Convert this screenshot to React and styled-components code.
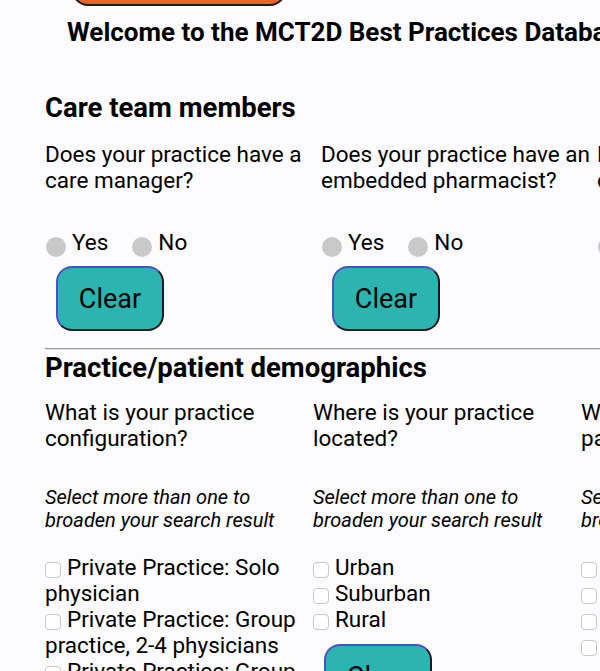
import React from "react";
import styled, { createGlobalStyle } from "styled-components";

const GlobalStyle = createGlobalStyle`
  html, body {
    margin: 0;
    padding: 0;
    overflow-x: hidden;
    background: #fcfbfd;
  }
  body {
    font-family: Roboto, "Liberation Sans", sans-serif;
    color: #000;
  }
`;

const Page = styled.div`
  width: 900px;
  padding-bottom: 40px;
`;

const TopButton = styled.button`
  display: block;
  margin: -52px 0 0 72px;
  width: 214px;
  height: 58px;
  background: #e8642f;
  border: 2px solid #1c1c1c;
  border-radius: 16px;
`;

const Title = styled.h2`
  margin: 12px 0 0 67px;
  font-size: 26px;
  line-height: 28px;
  font-weight: 700;
  white-space: nowrap;
`;

const Section = styled.section`
  padding-left: 45px;
  margin-top: ${(p) => p.$top || 0}px;
`;

const Rule = styled.hr`
  margin: 17px 0 0 0;
  border: none;
  border-top: 1px solid #9a9a9a;
  border-bottom: 1px solid #dcdcdc;
`;

const Heading = styled.h3`
  margin: ${(p) => p.$top || 0}px 0 0;
  font-size: 27.5px;
  line-height: 30px;
  font-weight: 700;
  white-space: nowrap;
`;

const Columns = styled.div`
  display: flex;
  align-items: flex-start;
  gap: ${(p) => p.$gap}px;
  margin-top: ${(p) => p.$top}px;
`;

const Column = styled.div`
  flex: 0 0 ${(p) => p.$width}px;
`;

const Question = styled.p`
  margin: 0;
  font-size: 22.5px;
  line-height: 26px;
`;

const Note = styled.p`
  margin: 35px 0 0;
  font-size: 20px;
  line-height: 23px;
  font-style: italic;
`;

const RadioRow = styled.div`
  display: flex;
  align-items: center;
  gap: 23px;
  margin-top: 37px;
  height: 24px;
`;

const RadioLabel = styled.label`
  display: flex;
  align-items: center;
  gap: 6px;
  font-size: 22.5px;
  line-height: 24px;
`;

const Radio = styled.input.attrs({ type: "radio" })`
  appearance: none;
  margin: 10px 0 0 1px;
  width: 20px;
  height: 20px;
  border-radius: 50%;
  background: #c9c9c9;
  border: none;
`;

const ClearButton = styled.button`
  display: block;
  margin: 12px 0 0 11px;
  width: 108px;
  height: 65px;
  background: #2bb5b0;
  border: 2px solid;
  border-color: #4a50c6 #1b1b22 #1b1b22 #4a50c6;
  border-radius: 16px;
  font-family: Roboto, "Liberation Sans", sans-serif;
  font-size: 27px;
  color: #000;
`;

const Options = styled.div`
  margin-top: 22px;
`;

const Option = styled.label`
  display: block;
  font-size: 22.5px;
  line-height: 26px;
`;

const Check = styled.input.attrs({ type: "checkbox" })`
  appearance: none;
  display: inline-block;
  vertical-align: -3px;
  margin: 0 6px 0 0;
  width: 16px;
  height: 16px;
  border: 1px solid #c8c8c8;
  border-radius: 4px;
  background: #fff;
  box-sizing: border-box;
`;

const careQuestions = [
  "Does your practice have a care manager?",
  "Does your practice have an embedded pharmacist?",
  "Does your practice have a certified educator?",
];

const demoQuestions = [
  {
    q: "What is your practice configuration?",
    options: [
      "Private Practice: Solo physician",
      "Private Practice: Group practice, 2-4 physicians",
      "Private Practice: Group practice, 5+ physicians",
      "Health system owned",
    ],
  },
  {
    q: "Where is your practice located?",
    options: ["Urban", "Suburban", "Rural"],
    clear: true,
  },
  {
    q: "What is your practice's patient population?",
    options: ["Under 1,000", "1,000-5,000", "5,000-10,000", "Over 10,000"],
  },
];

function YesNo({ name }) {
  return (
    <RadioRow>
      <RadioLabel>
        <Radio name={name} />
        Yes
      </RadioLabel>
      <RadioLabel>
        <Radio name={name} />
        No
      </RadioLabel>
    </RadioRow>
  );
}

export default function App() {
  return (
    <Page>
      <GlobalStyle />
      <TopButton aria-label="menu" />
      <Title>Welcome to the MCT2D Best Practices Database</Title>

      <Section $top={47}>
        <Heading>Care team members</Heading>
        <Columns $gap={6} $top={18}>
          {careQuestions.map((q, i) => (
            <Column key={q} $width={270}>
              <Question>{q}</Question>
              <YesNo name={`care-${i}`} />
              <ClearButton>Clear</ClearButton>
            </Column>
          ))}
        </Columns>
      </Section>

      <Section>
        <Rule />
        <Heading $top={3}>Practice/patient demographics</Heading>
        <Columns $gap={10} $top={16}>
          {demoQuestions.map((d) => (
            <Column key={d.q} $width={258}>
              <Question>{d.q}</Question>
              <Note>Select more than one to broaden your search result</Note>
              <Options>
                {d.options.map((o) => (
                  <Option key={o}>
                    <Check />
                    {o}
                  </Option>
                ))}
              </Options>
              {d.clear && <ClearButton>Clear</ClearButton>}
            </Column>
          ))}
        </Columns>
      </Section>
    </Page>
  );
}
